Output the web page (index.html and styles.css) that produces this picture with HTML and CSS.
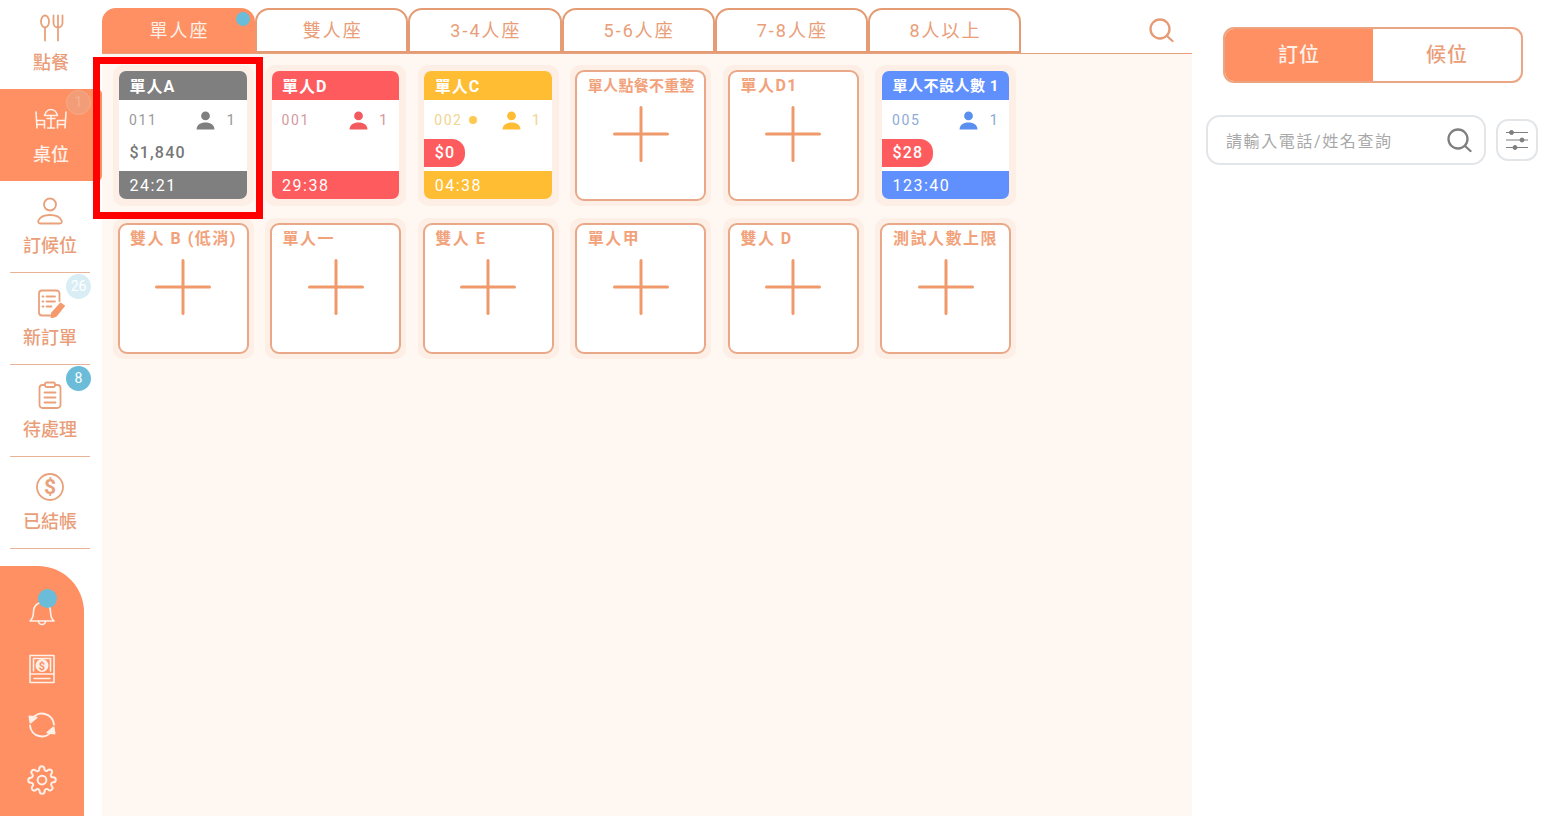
FILE: index.html
```html
<!DOCTYPE html>
<html lang="zh-Hant">
<head>
    <meta charset="UTF-8">
    <title>桌位</title>
    <link rel="stylesheet" href="styles.css">
</head>
<body>
    <svg class="defs" width="0" height="0">
        <symbol id="person" viewBox="0 0 20 20">
            <circle cx="10" cy="5.2" r="4.6"/>
            <path d="M.6 19.4c0-4.6 4-7.2 9.4-7.2s9.400 2.600 9.400 7.200z"/>
        </symbol>
        <symbol id="plus" viewBox="0 0 58 58">
            <path d="M29 2.500v53M2.500 29h53" fill="none" stroke="currentColor" stroke-width="3" stroke-linecap="round"/>
        </symbol>
        <symbol id="search" viewBox="0 0 26 26">
            <circle cx="12" cy="12" r="9.500" fill="none" stroke="currentColor" stroke-width="2.300"/>
            <path d="M19 19l5.500 5" fill="none" stroke="currentColor" stroke-width="2.300" stroke-linecap="round"/>
        </symbol>
    </svg>

    <div class="app">
        <aside class="sidebar">
            <nav class="nav">
                <a class="nav-item nav-first">
                    <svg class="nav-icon" viewBox="0 0 30 30">
                        <ellipse cx="9" cy="8.500" rx="4" ry="6"/>
                        <path d="M9 14.500v13M17.500 2.500v7.500a4.500 4.500 0 0 0 9 0v-7.500M22 2.500v25"/>
                    </svg>
                    <span>點餐</span>
                </a>
                <a class="nav-item active">
                    <svg class="nav-icon nav-icon-wide" viewBox="0 0 34 22">
                        <path d="M2 4l1 16M3 12.500h7.500V20M3 16.500h7.500M32 4l-1 16M31 12.500h-7.500V20M31 16.500h-7.500"/>
                        <path d="M10.500 7.500c1-3.500 3.500-6 6.500-6s5.500 2.500 6.500 6zM17 7.500V20M13 10.500h8M13.500 20h7"/>
                    </svg>
                    <span>桌位</span>
                    <b class="badge badge-faded">1</b>
                </a>
                <a class="nav-item lined">
                    <svg class="nav-icon" viewBox="0 0 30 30">
                        <circle cx="15" cy="8.500" r="6"/>
                        <path d="M5.500 27.500c-2.500 0-2.500-2-2-3 1.500-3.500 6-5.500 11.500-5.500s10 2 11.500 5.500c.5 1 .5 3-2 3z"/>
                    </svg>
                    <span>訂候位</span>
                </a>
                <a class="nav-item lined">
                    <svg class="nav-icon" viewBox="0 0 30 30">
                        <path d="M24.500 13V5.500a3 3 0 0 0-3-3H7a3 3 0 0 0-3 3v19a3 3 0 0 0 3 3h8.500"/>
                        <path d="M11.500 8.500h8.500M11.500 13.500h8.500M11.500 18.500h5M7.500 8.500h1M7.500 13.500h1M7.500 18.500h1"/>
                        <path class="nav-fill" d="M25.500 15.500l3.500 2.500-8 10-4.500 1.500.5-4.500z"/>
                    </svg>
                    <span>新訂單</span>
                    <b class="badge badge-pale">26</b>
                </a>
                <a class="nav-item lined">
                    <svg class="nav-icon" viewBox="0 0 30 30">
                        <path d="M10 5H7.500a3 3 0 0 0-3 3v17a3 3 0 0 0 3 3h15a3 3 0 0 0 3-3V8a3 3 0 0 0-3-3H20"/>
                        <rect x="10" y="2.500" width="10" height="4.500" rx="1.500"/>
                        <path d="M9.500 12.500h11M9.500 17.500h11M9.500 22.500h11"/>
                    </svg>
                    <span>待處理</span>
                    <b class="badge badge-blue">8</b>
                </a>
                <a class="nav-item lined">
                    <svg class="nav-icon" viewBox="0 0 30 30">
                        <circle cx="15" cy="15" r="13"/>
                        <text x="15" y="22" text-anchor="middle">$</text>
                    </svg>
                    <span>已結帳</span>
                </a>
            </nav>

            <div class="tools">
                <div class="tool">
                    <svg viewBox="0 0 30 30">
                        <path d="M3 24c3-2.500 3.500-5 3.500-9.500 0-5 3.500-9 8.500-9s8.500 4 8.500 9c0 4.500.5 7 3.500 9.500z"/>
                        <path d="M11.500 24a3.500 3.500 0 0 0 7 0"/>
                    </svg>
                    <i class="tool-dot"></i>
                </div>
                <div class="tool">
                    <svg viewBox="0 0 30 30">
                        <rect x="3" y="1.500" width="24" height="27"/>
                        <path d="M3 20h24M7 24.500h16"/>
                        <path d="M6.500 17V4.500h17V17"/>
                        <circle class="tool-coin" cx="15" cy="11.500" r="6.500"/>
                        <text class="tool-coin-mark" x="15" y="15.500" text-anchor="middle">$</text>
                    </svg>
                </div>
                <div class="tool">
                    <svg class="tool-sync" viewBox="0 0 30 30">
                        <path d="M27 14.500A12 12 0 0 0 5 9M3 15.500A12 12 0 0 0 25 21"/>
                        <path class="tool-solid" d="M2.500 6.500l7 1-6 5zM27.500 23.500l-7-1 6-5z"/>
                    </svg>
                </div>
                <div class="tool">
                    <svg viewBox="0 0 24 24">
                        <circle cx="12" cy="12" r="3.500"/>
                        <path d="M19.400 15a1.650 1.650 0 0 0 .33 1.820l.06.06a2 2 0 0 1-2.830 2.830l-.06-.06a1.650 1.650 0 0 0-2.800 1.170V21a2 2 0 0 1-4 0v-.09a1.650 1.650 0 0 0-2.820-1.110l-.06.06a2 2 0 0 1-2.830-2.830l.06-.06a1.650 1.650 0 0 0-1.170-2.800H3a2 2 0 0 1 0-4h.09A1.650 1.650 0 0 0 4.200 7.350l-.06-.06a2 2 0 0 1 2.830-2.830l.06.06a1.650 1.650 0 0 0 2.800-1.170V3a2 2 0 0 1 4 0v.09a1.650 1.650 0 0 0 2.800 1.170l.06-.06a2 2 0 0 1 2.830 2.830l-.06.06a1.650 1.650 0 0 0 1.170 2.800H21a2 2 0 0 1 0 4h-.09a1.650 1.650 0 0 0-1.510 1z"/>
                    </svg>
                </div>
            </div>
        </aside>

        <main class="main">
            <header class="topbar">
                <div class="tabs">
                    <div class="tab active">單人座<i class="tab-dot"></i></div>
                    <div class="tab">雙人座</div>
                    <div class="tab">3-4人座</div>
                    <div class="tab">5-6人座</div>
                    <div class="tab">7-8人座</div>
                    <div class="tab">8人以上</div>
                </div>
                <svg class="top-search"><use href="#search"/></svg>
            </header>

            <section class="tables">
                <div class="cell">
                    <div class="card filled gray">
                        <div class="card-head">單人A</div>
                        <div class="card-info"><span class="code">011</span><svg class="person"><use href="#person"/></svg><span class="count">1</span></div>
                        <div class="price">$1,840</div>
                        <div class="card-foot">24:21</div>
                    </div>
                </div>
                <div class="cell">
                    <div class="card filled red">
                        <div class="card-head">單人D</div>
                        <div class="card-info"><span class="code">001</span><svg class="person"><use href="#person"/></svg><span class="count">1</span></div>
                        <div class="price"></div>
                        <div class="card-foot">29:38</div>
                    </div>
                </div>
                <div class="cell">
                    <div class="card filled yellow">
                        <div class="card-head">單人C</div>
                        <div class="card-info"><span class="code">002</span><i class="code-dot"></i><svg class="person"><use href="#person"/></svg><span class="count">1</span></div>
                        <div class="price"><span class="pill">$0</span></div>
                        <div class="card-foot">04:38</div>
                    </div>
                </div>
                <div class="cell">
                    <div class="card empty"><div class="card-title tight">單人點餐不重整</div><svg class="plus"><use href="#plus"/></svg></div>
                </div>
                <div class="cell">
                    <div class="card empty"><div class="card-title">單人D1</div><svg class="plus"><use href="#plus"/></svg></div>
                </div>
                <div class="cell">
                    <div class="card filled blue">
                        <div class="card-head tight">單人不設人數 1</div>
                        <div class="card-info"><span class="code">005</span><svg class="person"><use href="#person"/></svg><span class="count">1</span></div>
                        <div class="price"><span class="pill">$28</span></div>
                        <div class="card-foot">123:40</div>
                    </div>
                </div>

                <div class="cell">
                    <div class="card empty"><div class="card-title">雙人 B (低消)</div><svg class="plus"><use href="#plus"/></svg></div>
                </div>
                <div class="cell">
                    <div class="card empty"><div class="card-title">單人一</div><svg class="plus"><use href="#plus"/></svg></div>
                </div>
                <div class="cell">
                    <div class="card empty"><div class="card-title">雙人 E</div><svg class="plus"><use href="#plus"/></svg></div>
                </div>
                <div class="cell">
                    <div class="card empty"><div class="card-title">單人甲</div><svg class="plus"><use href="#plus"/></svg></div>
                </div>
                <div class="cell">
                    <div class="card empty"><div class="card-title">雙人 D</div><svg class="plus"><use href="#plus"/></svg></div>
                </div>
                <div class="cell">
                    <div class="card empty"><div class="card-title">測試人數上限</div><svg class="plus"><use href="#plus"/></svg></div>
                </div>
            </section>
        </main>

        <aside class="panel">
            <div class="toggle">
                <div class="toggle-item active">訂位</div>
                <div class="toggle-item">候位</div>
            </div>
            <div class="finder">
                <div class="search-box">
                    <span class="search-hint">請輸入電話/姓名查詢</span>
                    <svg class="search-icon"><use href="#search"/></svg>
                </div>
                <div class="filter-btn">
                    <svg viewBox="0 0 24 24">
                        <path d="M1 4.500h22M1 12h22M1 19.500h22"/>
                        <circle cx="6.500" cy="4.500" r="2"/>
                        <circle cx="17" cy="12" r="2"/>
                        <circle cx="10" cy="19.500" r="2"/>
                    </svg>
                </div>
            </div>
        </aside>
    </div>

    <div class="highlight"></div>
</body>
</html>
```

FILE: styles.css
```css
body, html {
    height: 100%;
    margin: 0;
    font-family: Roboto, "Noto Sans CJK TC", sans-serif;
    background: #fff;
    overflow: hidden;
}

.defs {
    position: absolute;
}

.app {
    display: flex;
    height: 816px;
}

/* sidebar */
.sidebar {
    flex: 0 0 102px;
    display: flex;
    flex-direction: column;
    justify-content: space-between;
    height: 816px;
}

.nav-item {
    position: relative;
    display: flex;
    flex-direction: column;
    align-items: center;
    box-sizing: border-box;
    height: 92px;
    padding-top: 15px;
    color: #e99e79;
    font-size: 18px;
    font-weight: 500;
    line-height: 28px;
}

.nav-item span {
    margin-top: 6px;
}

.nav-first {
    height: 89px;
    padding-top: 13px;
}

.nav-item.active {
    background: #fe9063;
    color: #fdf0e8;
    border-radius: 0 5px 5px 0;
}

.nav-item.active span {
    margin-top: 7px;
}

.nav-item.lined {
    width: 80px;
    margin-left: 10px;
    border-bottom: 1px solid #e9b397;
}

.nav-icon {
    width: 30px;
    height: 30px;
    fill: none;
    stroke: #e9a17c;
    stroke-width: 1.8;
    stroke-linecap: round;
    stroke-linejoin: round;
}

.nav-icon-wide {
    width: 34px;
    stroke: #fdf0e8;
    stroke-width: 1.6;
}

.nav-icon text {
    fill: #e9a17c;
    stroke: none;
    font-size: 21px;
    font-weight: 700;
}

.nav-icon .nav-fill {
    fill: #f49a6c;
    stroke: #f49a6c;
}

.badge {
    position: absolute;
    top: 1px;
    left: 66px;
    width: 25px;
    height: 25px;
    border-radius: 50%;
    color: #fff;
    font-size: 14px;
    font-weight: 400;
    line-height: 25px;
    text-align: center;
}

.lined .badge {
    left: 56px;
}

.badge-faded {
    box-sizing: border-box;
    line-height: 23px;
    background: #f39c78;
    border: 1px solid #f7ab8a;
    color: #f8b090;
}

.badge-pale {
    background: #d9edf4;
}

.badge-blue {
    background: #6bbcd8;
}

.tools {
    box-sizing: border-box;
    display: flex;
    flex-direction: column;
    align-items: center;
    width: 84px;
    height: 250px;
    padding: 31px 0 0 0;
    gap: 26.500px;
    background: #fe9063;
    border-radius: 0 46px 0 0;
}

.tool {
    position: relative;
    width: 30px;
    height: 30px;
}

.tool svg {
    display: block;
    width: 30px;
    height: 30px;
    fill: none;
    stroke: #fdf0e8;
    stroke-width: 1.6;
    stroke-linejoin: round;
    stroke-linecap: round;
}

.tool .tool-sync {
    stroke-width: 2;
}

.tool:last-child {
    margin-top: -2px;
}

.tool .tool-solid {
    fill: #fdf0e8;
}

.tool .tool-coin {
    fill: #fdf0e8;
    stroke: none;
}

.tool .tool-coin-mark {
    fill: #fe9063;
    stroke: none;
    font-size: 11px;
    font-weight: 700;
}

.tool-dot {
    position: absolute;
    top: -8.500px;
    left: 10.500px;
    width: 19px;
    height: 19px;
    border-radius: 50%;
    background: #6bbcd8;
}

/* main area */
.main {
    flex: 0 0 1090px;
    background: #fff8f2;
}

.topbar {
    display: flex;
    justify-content: space-between;
    align-items: flex-start;
    box-sizing: border-box;
    height: 54px;
    padding: 8px 18px 0 0;
    background: #fff;
    border-bottom: 1px solid #e9a17c;
}

.tabs {
    display: flex;
}

.tab {
    position: relative;
    flex: 0 0 153.200px;
    box-sizing: border-box;
    height: 45px;
    padding-left: 2px;
    border: 2px solid #e59b74;
    border-radius: 14px 14px 0 0;
    color: #e99e79;
    font-size: 18px;
    letter-spacing: 2px;
    line-height: 42px;
    text-align: center;
}

.tab.active {
    background: #fe9063;
    border-color: #fe9063;
    color: #fdf0e8;
}

.tab-dot {
    position: absolute;
    top: 2px;
    right: 3px;
    width: 14px;
    height: 14px;
    border-radius: 50%;
    background: #6bbcd8;
}

.top-search {
    width: 26px;
    height: 26px;
    margin-top: 9px;
    color: #e59b74;
}

.tables {
    display: grid;
    grid-template-columns: repeat(6, 141px);
    grid-auto-rows: 141px;
    column-gap: 11.600px;
    row-gap: 12px;
    padding: 11px 0 0 10.500px;
}

.cell {
    box-sizing: border-box;
    padding: 5px;
    background: #fdefe6;
    border-radius: 10px;
}

.card {
    box-sizing: border-box;
    height: 131px;
    border-radius: 9px;
    background: #fff;
}

.card.empty {
    border: 2px solid #e9a988;
    padding: 0 8px;
    color: #f09a6c;
}

.card-title {
    padding-left: 2.500px;
    font-size: 16px;
    font-weight: 700;
    letter-spacing: 1.500px;
    line-height: 28px;
    white-space: nowrap;
    color: #f2a27a;
}

.card-title.tight {
    font-size: 15px;
    letter-spacing: .3px;
}

.plus {
    display: block;
    width: 58px;
    height: 58px;
    margin: 5px auto 0;
}

.card.filled {
    display: flex;
    flex-direction: column;
    margin: 1px 2px 0 1.500px;
    height: 128px;
    overflow: hidden;
    border-radius: 7px;
}

.card-head {
    height: 29px;
    padding-left: 10.500px;
    margin-bottom: 1px;
    color: #fff;
    font-size: 16px;
    font-weight: 700;
    letter-spacing: 1px;
    line-height: 31px;
    white-space: nowrap;
}

.card-head.tight {
    font-size: 15px;
    letter-spacing: .5px;
}

.card-info {
    display: flex;
    align-items: center;
    height: 38px;
    padding: 0 10px 0 10px;
    font-size: 14px;
    letter-spacing: 1.600px;
}

.code-dot {
    width: 8px;
    height: 8px;
    margin-left: 6px;
    border-radius: 50%;
}

.person {
    width: 19px;
    height: 19px;
    margin-left: auto;
}

.count {
    margin-left: 11px;
    font-size: 15px;
}

.price {
    flex: 1;
    padding-left: 10.500px;
    color: #777;
    font-size: 16px;
    font-weight: 500;
    letter-spacing: 1.200px;
    line-height: 28px;
}

.pill {
    display: block;
    width: max-content;
    min-width: 20px;
    height: 28px;
    margin-left: -10.500px;
    padding: 0 10px 0 10.500px;
    background: #fe5b5e;
    border-radius: 0 13px 13px 0;
    color: #fff;
}

.card-foot {
    height: 28px;
    padding-left: 10.500px;
    color: #fff;
    font-size: 16px;
    letter-spacing: 1.500px;
    line-height: 30px;
}

.gray .card-head, .gray .card-foot { background: #7f7f7f; }
.gray .code, .gray .count { color: #9a9a9a; }
.gray .person { fill: #7f7f7f; }

.red .card-head, .red .card-foot { background: #fe5b5e; }
.red .code, .red .count { color: #d49aa0; }
.red .person { fill: #f25a5e; }

.yellow .card-head, .yellow .card-foot { background: #ffbd33; }
.yellow .code, .yellow .count { color: #f0d591; }
.yellow .person { fill: #ffbd33; }
.yellow .code-dot { background: #ffc84e; }

.blue .card-head, .blue .card-foot { background: #5f90fd; }
.blue .code, .blue .count { color: #8dabd6; }
.blue .person { fill: #5a8ff0; }

/* right panel */
.panel {
    flex: 1;
    padding-top: 27px;
}

.toggle {
    display: flex;
    box-sizing: border-box;
    width: 300px;
    height: 56px;
    margin-left: 31px;
    overflow: hidden;
    border: 2px solid #eba583;
    border-radius: 11px;
}

.toggle-item {
    flex: 1;
    color: #e99e79;
    font-size: 20px;
    font-weight: 500;
    letter-spacing: 1px;
    line-height: 52px;
    text-align: center;
}

.toggle-item.active {
    background: #fe9063;
    color: #fdf0e8;
}

.finder {
    display: flex;
    align-items: center;
    gap: 10px;
    margin: 32px 0 0 14px;
}

.search-box {
    display: flex;
    align-items: center;
    justify-content: space-between;
    box-sizing: border-box;
    width: 280px;
    height: 50px;
    padding: 0 12px 0 18px;
    border: 2px solid #e3e6e9;
    border-radius: 14px;
}

.search-hint {
    color: #a8a8a8;
    font-size: 16px;
    letter-spacing: 1.600px;
}

.search-icon {
    width: 26px;
    height: 26px;
    color: #7f7f7f;
}

.filter-btn {
    display: flex;
    align-items: center;
    justify-content: center;
    box-sizing: border-box;
    width: 42px;
    height: 42px;
    border: 2px solid #e3e6e9;
    border-radius: 12px;
}

.filter-btn svg {
    width: 24px;
    height: 24px;
    fill: #7f7f7f;
    stroke: #7f7f7f;
    stroke-width: 1;
}

/* red marker drawn over the first table */
.highlight {
    position: absolute;
    top: 57px;
    left: 93px;
    box-sizing: border-box;
    width: 170px;
    height: 162px;
    border: 7px solid #f00;
}
```
